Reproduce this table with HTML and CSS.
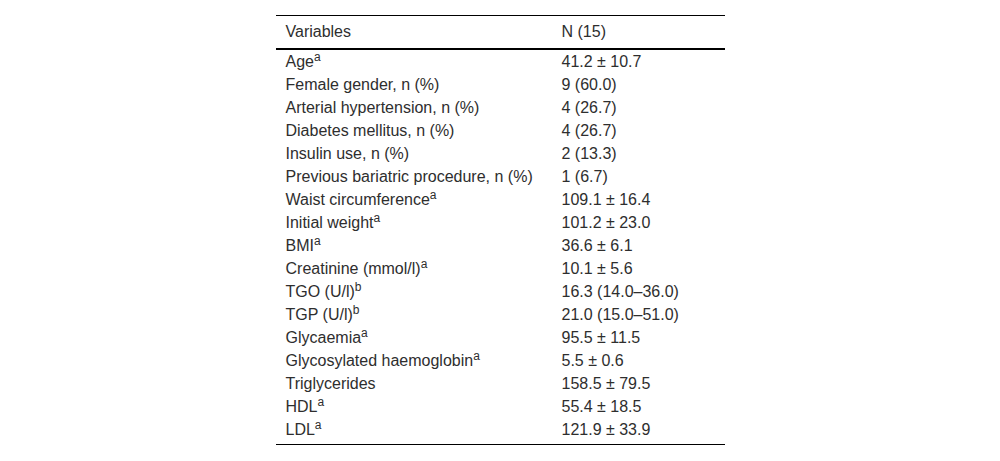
FILE: index.html
```html
<!DOCTYPE html>
<html lang="en">
<head>
<meta charset="utf-8">
<title>Table</title>
<link rel="stylesheet" href="styles.css">
</head>
<body>
<div class="wrap">
<table class="data">
<thead>
<tr><th class="c1">Variables</th><th class="c2">N (15)</th></tr>
</thead>
<tbody>
<tr><td>Age<sup>a</sup></td><td>41.2 ± 10.7</td></tr>
<tr><td>Female gender, n (%)</td><td>9 (60.0)</td></tr>
<tr><td>Arterial hypertension, n (%)</td><td>4 (26.7)</td></tr>
<tr><td>Diabetes mellitus, n (%)</td><td>4 (26.7)</td></tr>
<tr><td>Insulin use, n (%)</td><td>2 (13.3)</td></tr>
<tr><td>Previous bariatric procedure, n (%)</td><td>1 (6.7)</td></tr>
<tr><td>Waist circumference<sup>a</sup></td><td>109.1 ± 16.4</td></tr>
<tr><td>Initial weight<sup>a</sup></td><td>101.2 ± 23.0</td></tr>
<tr><td>BMI<sup>a</sup></td><td>36.6 ± 6.1</td></tr>
<tr><td>Creatinine (mmol/l)<sup>a</sup></td><td>10.1 ± 5.6</td></tr>
<tr><td>TGO (U/l)<sup>b</sup></td><td>16.3 (14.0–36.0)</td></tr>
<tr><td>TGP (U/l)<sup>b</sup></td><td>21.0 (15.0–51.0)</td></tr>
<tr><td>Glycaemia<sup>a</sup></td><td>95.5 ± 11.5</td></tr>
<tr><td>Glycosylated haemoglobin<sup>a</sup></td><td>5.5 ± 0.6</td></tr>
<tr><td>Triglycerides</td><td>158.5 ± 79.5</td></tr>
<tr><td>HDL<sup>a</sup></td><td>55.4 ± 18.5</td></tr>
<tr class="last"><td>LDL<sup>a</sup></td><td>121.9 ± 33.9</td></tr>
</tbody>
</table>
</div>
</body>
</html>
```
FILE: styles.css
```css
html, body {
  margin: 0;
  padding: 0;
  background: #ffffff;
}
body {
  font-family: "Liberation Sans", Arial, sans-serif;
  font-size: 16px;
  color: #2e2e2e;
}
.wrap {
  padding-top: 15px;
}
.data {
  width: 449px;
  margin: 0 auto;
  border-collapse: separate;
  border-spacing: 0;
  border-top: 1px solid #000;
  border-bottom: 1px solid #000;
}
.data th,
.data td {
  text-align: left;
  font-weight: normal;
  line-height: 17px;
  padding: 3px 10px;
  white-space: nowrap;
  vertical-align: top;
}
.data th {
  padding-top: 7px;
  padding-bottom: 8px;
  border-bottom: 2px solid #000;
}
.data .c1 {
  width: 256px;
}
.data tr.last td {
  padding-bottom: 6px;
}
.data sup {
  font-size: 12px;
  line-height: 0;
  vertical-align: 6px;
}
```
